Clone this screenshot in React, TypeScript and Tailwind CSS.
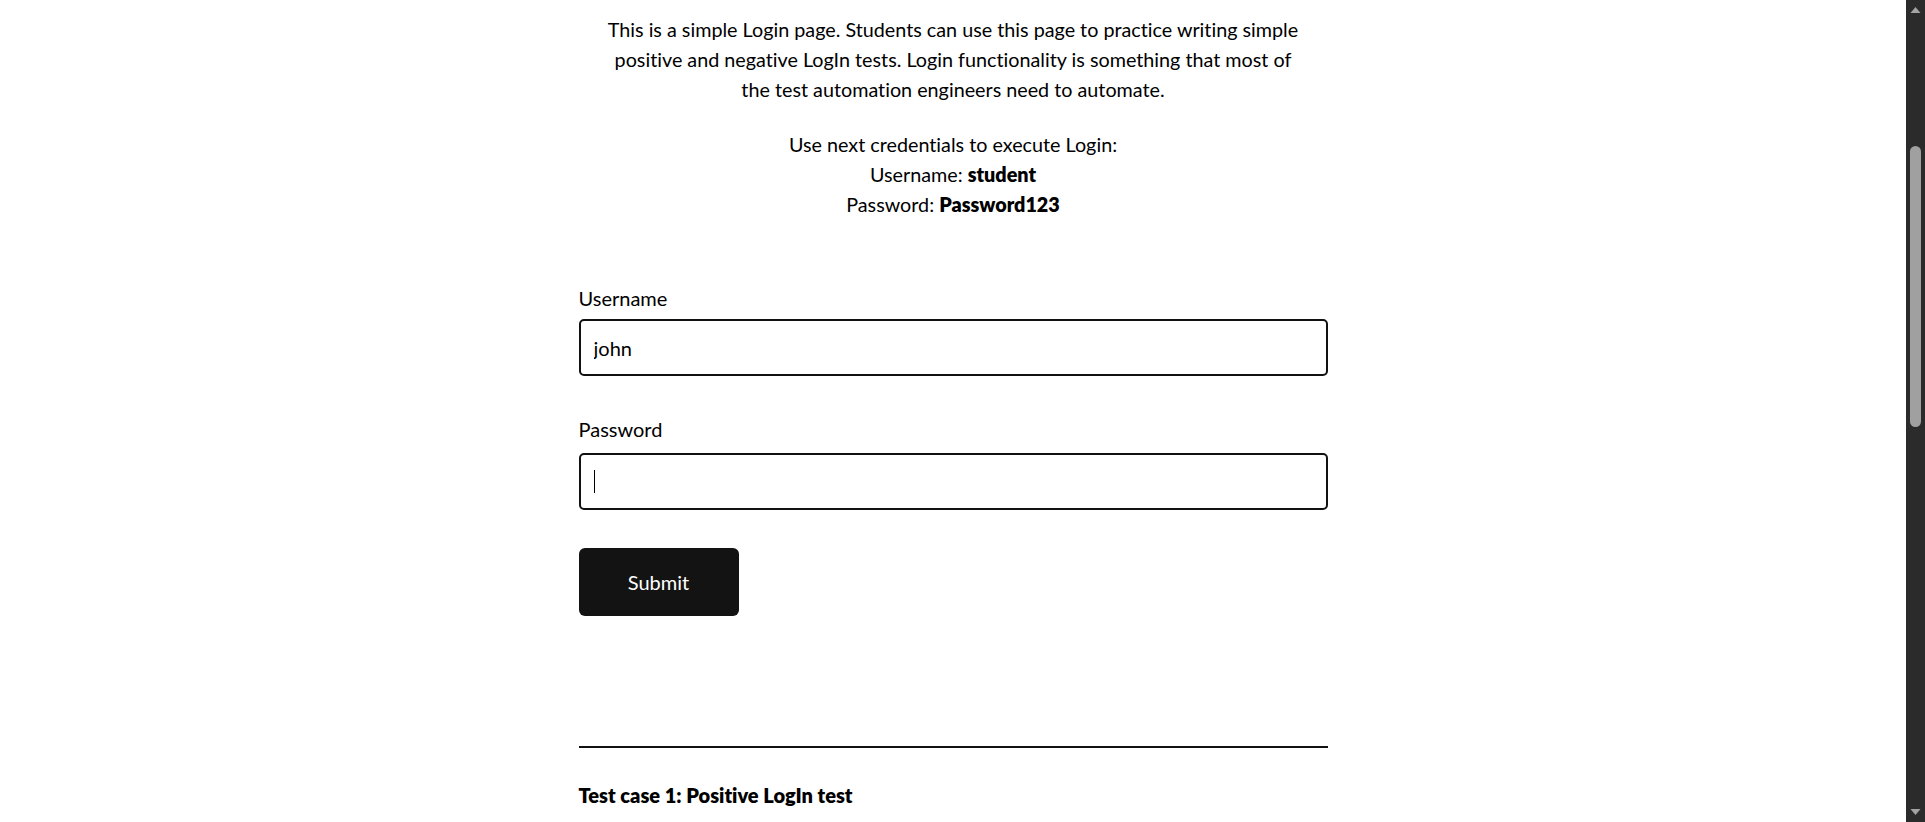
import React from "react";

export default function App() {
  return (
    <div className="flex h-[822px] w-full overflow-hidden bg-white font-[Lato,sans-serif] text-black [font-variant-ligatures:none]">
      <main className="flex flex-1 justify-center">
        <div className="w-[749px] pt-[15px]">
          <p className="mx-auto max-w-[697px] text-center text-[19.75px] leading-[30px]">
            This is a simple Login page. Students can use this page to practice writing simple
            positive and negative LogIn tests. Login functionality is something that most of
            the test automation engineers need to automate.
          </p>
          <p className="mt-[25px] text-center text-[19.75px] leading-[30px]">
            Use next credentials to execute Login:
            <br />
            Username: <b className="font-extrabold">student</b>
            <br />
            Password: <b className="font-extrabold">Password123</b>
          </p>

          <div className="mt-[63px]">
            <label className="block text-[20px] leading-[30px]">Username</label>
            <input
              defaultValue="john"
              className="mt-[6px] block h-[57px] w-full rounded-[5px] border-2 border-[#111] px-[13px] text-[20px] outline-none"
            />
          </div>

          <div className="mt-[38px]">
            <label className="block text-[20px] leading-[30px]">Password</label>
            <div className="relative mt-[9px]">
              <input
                type="password"
                className="block h-[57px] w-full rounded-[5px] border-2 border-[#111] px-[13px] text-[20px] outline-none"
              />
              <div className="pointer-events-none absolute left-[15px] top-[17px] h-[23px] w-px bg-black" />
            </div>
          </div>

          <button className="mt-[38px] h-[68px] w-[160px] rounded-[6px] bg-[#131313] text-[20px] text-white">
            Submit
          </button>

          <hr className="mt-[130px] border-0 border-t-2 border-[#111]" />

          <h2 className="mt-[32px] text-[20px] font-extrabold leading-[30px]">
            Test case 1: Positive LogIn test
          </h2>
        </div>
      </main>

      <div className="flex h-full w-[19px] flex-col items-center bg-[#2b2b2b]">
        <svg width="19" height="17" viewBox="0 0 19 17" className="shrink-0">
          <polygon points="4.5,13 14.5,13 9.5,7" fill="#a3a3a3" />
        </svg>
        <div className="mt-[129px] h-[281px] w-[11px] rounded-full bg-[#a0a0a0]" />
        <div className="flex-1" />
        <svg width="19" height="17" viewBox="0 0 19 17" className="shrink-0">
          <polygon points="4.5,4 14.5,4 9.5,10" fill="#a3a3a3" />
        </svg>
      </div>
    </div>
  );
}
